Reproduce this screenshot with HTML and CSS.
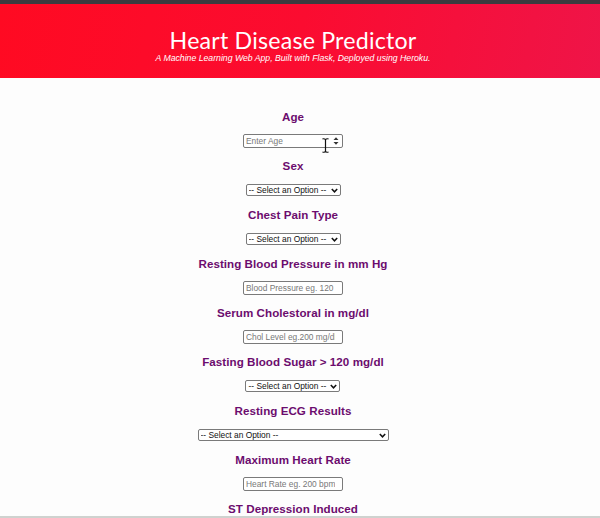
FILE: index.html
```html
<!DOCTYPE html>
<html>
<head>
<meta charset="utf-8">
<title>Heart Disease Predictor</title>
<link rel="stylesheet" href="styles.css">
</head>
<body>
<div class="topbar"></div>
<header class="hero">
  <h1 class="title">Heart Disease Predictor</h1>
  <p class="subtitle">A Machine Learning Web App, Built with Flask, Deployed using Heroku.</p>
</header>
<form class="form">
  <div class="field">
    <label class="label">Age</label>
    <div class="ctl-wrap">
      <input class="input" type="text" placeholder="Enter Age">
      <svg class="spin" width="6" height="10" viewBox="0 0 6 10"><path d="M0.5 4 L3 1.2 L5.5 4 Z M0.5 6 L3 8.8 L5.5 6 Z" fill="#333"/></svg>
      <svg class="ibeam" width="7" height="15" viewBox="0 0 7 15"><path d="M0.5 0.8 Q3.5 0.5 3.5 2.2 Q3.5 0.5 6.5 0.8 M3.5 2.2 V12.8 M0.5 14.2 Q3.5 14.5 3.5 12.8 Q3.5 14.5 6.5 14.2" fill="none" stroke="#111" stroke-width="1.2"/></svg>
    </div>
  </div>
  <div class="field">
    <label class="label">Sex</label>
    <div class="ctl-wrap sel">
      <select class="select"><option>-- Select an Option --</option></select>
      <svg class="chev" width="7" height="5" viewBox="0 0 7 5"><path d="M0.8 0.9 L3.5 3.8 L6.2 0.9" fill="none" stroke="#111" stroke-width="1.5"/></svg>
    </div>
  </div>
  <div class="field">
    <label class="label">Chest Pain Type</label>
    <div class="ctl-wrap sel">
      <select class="select"><option>-- Select an Option --</option></select>
      <svg class="chev" width="7" height="5" viewBox="0 0 7 5"><path d="M0.8 0.9 L3.5 3.8 L6.2 0.9" fill="none" stroke="#111" stroke-width="1.5"/></svg>
    </div>
  </div>
  <div class="field">
    <label class="label">Resting Blood Pressure in mm Hg</label>
    <input class="input" type="text" placeholder="Blood Pressure eg. 120">
  </div>
  <div class="field">
    <label class="label">Serum Cholestoral in mg/dl</label>
    <input class="input" type="text" placeholder="Chol Level eg.200 mg/dl">
  </div>
  <div class="field">
    <label class="label">Fasting Blood Sugar &gt; 120 mg/dl</label>
    <div class="ctl-wrap sel">
      <select class="select"><option>-- Select an Option --</option></select>
      <svg class="chev" width="7" height="5" viewBox="0 0 7 5"><path d="M0.8 0.9 L3.5 3.8 L6.2 0.9" fill="none" stroke="#111" stroke-width="1.5"/></svg>
    </div>
  </div>
  <div class="field">
    <label class="label">Resting ECG Results</label>
    <div class="ctl-wrap sel wide">
      <select class="select"><option>-- Select an Option --</option></select>
      <svg class="chev" width="7" height="5" viewBox="0 0 7 5"><path d="M0.8 0.9 L3.5 3.8 L6.2 0.9" fill="none" stroke="#111" stroke-width="1.5"/></svg>
    </div>
  </div>
  <div class="field">
    <label class="label">Maximum Heart Rate</label>
    <input class="input" type="text" placeholder="Heart Rate eg. 200 bpm">
  </div>
  <div class="field">
    <label class="label">ST Depression Induced</label>
    <input class="input" type="text" placeholder="ST Depression eg. 1.5">
  </div>
</form>
<div class="bottomline"></div>
</body>
</html>
```
FILE: styles.css
```css
html, body {
  margin: 0;
  padding: 0;
  background: #fdfdfd;
  font-family: "Liberation Sans", Arial, sans-serif;
}
.topbar {
  height: 4px;
  background: #3b3b3f;
}
.hero {
  height: 74px;
  padding-right: 14px;
  background: linear-gradient(100deg, #ff0a22 0%, #fb0c30 50%, #ef1448 100%);
  display: flex;
  flex-direction: column;
  align-items: center;
  color: #fff;
}
.title {
  margin: 23px 0 0 0;
  font-family: "Comic Sans MS", "Lato", sans-serif;
  font-weight: 400;
  font-size: 23.2px;
  line-height: 26px;
  letter-spacing: 0.2px;
}
.subtitle {
  margin: 0;
  font-style: italic;
  font-size: 8.7px;
  line-height: 11px;
}
.form {
  display: flex;
  flex-direction: column;
  align-items: center;
  padding-top: 31px;
  padding-right: 14px;
}
.field {
  display: flex;
  flex-direction: column;
  align-items: center;
  height: 49px;
}
.label {
  display: block;
  font-weight: 700;
  font-size: 11.6px;
  line-height: 16px;
  letter-spacing: 0.05px;
  color: #6c0c6e;
  margin-bottom: 9px;
}
.input {
  display: block;
  box-sizing: border-box;
  width: 100px;
  height: 14px;
  padding: 0 7px 0 2px;
  border: 1px solid #7a7a7a;
  border-radius: 2px;
  font-family: "Liberation Sans", Arial, sans-serif;
  font-size: 8.4px;
  background: #fff;
  outline: none;
}
.input::placeholder {
  color: #787878;
}
.ctl-wrap {
  position: relative;
  width: 100px;
  height: 14px;
}
.ctl-wrap.sel {
  width: 95px;
  height: 12px;
  margin-top: 1px;
}
.ctl-wrap.sel.wide {
  width: 191px;
}
.spin {
  position: absolute;
  right: 4px;
  top: 2px;
}
.ibeam {
  position: absolute;
  left: 79px;
  top: 4px;
}
.select {
  display: block;
  -webkit-appearance: none;
  appearance: none;
  box-sizing: border-box;
  width: 100%;
  height: 12px;
  padding: 0 0 0 2px;
  border: 1px solid #7a7a7a;
  border-radius: 2px;
  font-family: "Liberation Sans", Arial, sans-serif;
  font-size: 8.4px;
  line-height: 10px;
  color: #111;
  background: #fff;
}
.chev {
  position: absolute;
  right: 3px;
  top: 4px;
}
.bottomline {
  position: fixed;
  left: 0;
  right: 0;
  bottom: 0;
  height: 2px;
  background: #cfd2cf;
}
```
